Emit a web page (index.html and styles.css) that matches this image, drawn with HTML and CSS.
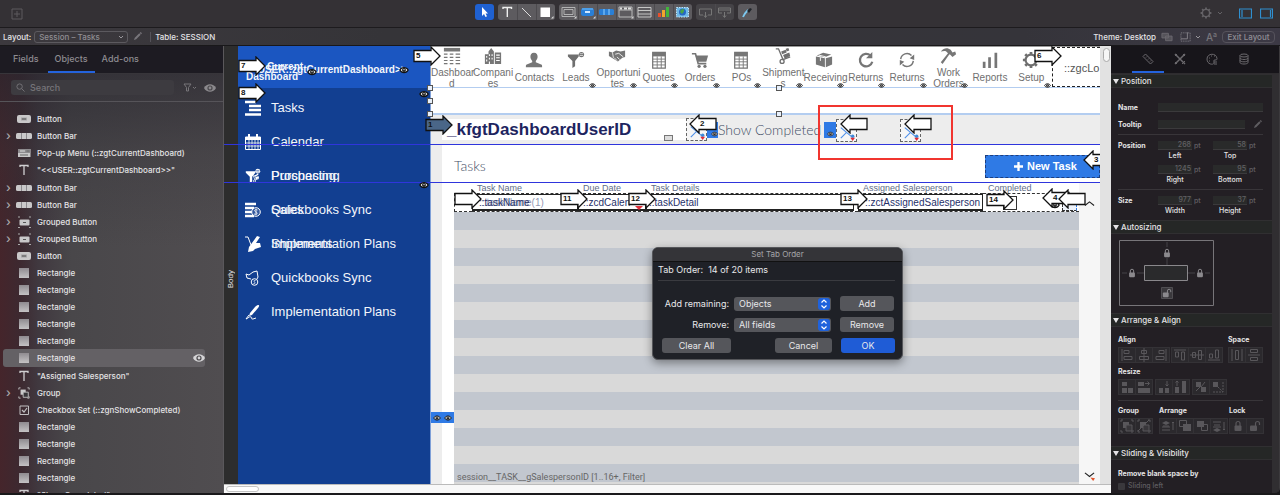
FILE: index.html
```html
<!DOCTYPE html>
<html lang="en">
<head>
<meta charset="utf-8">
<title>Session – Tasks</title>
<link rel="stylesheet" href="styles.css">
</head>
<body>
<svg class="defs" aria-hidden="true">
  <symbol id="arrow-r" viewBox="0 0 28 20"><path d="M1 4.5h17V1l9 9-9 9v-3.500H1z" stroke="#111" stroke-width="1.300"/></symbol>
  <symbol id="arrow-l" viewBox="0 0 28 20"><path d="M27 4.500H10V1l-9 9 9 9v-3.500h17z" stroke="#111" stroke-width="1.300"/></symbol>
  <symbol id="eye" viewBox="0 0 12 8"><path d="M1 4c2-4 8-4 10 0-2 4-8 4-10 0z" fill="#fff" stroke="#111" stroke-width="1.500"/><circle cx="6" cy="4" r="2.300" fill="#111"/><circle cx="6" cy="3.600" r=".8" fill="#fff"/></symbol>
  <symbol id="eye-ui" viewBox="0 0 12 8"><path d="M0 4c2.500-5 9.500-5 12 0-2.500 5-9.500 5-12 0z" fill="currentColor"/><circle cx="6" cy="4" r="2.600" fill="#4a484c"/><circle cx="6" cy="4" r="1.400" fill="currentColor"/></symbol>
  <symbol id="o-button" viewBox="0 0 16 12"><rect x="1" y="2" width="14" height="8" rx="2" fill="#c9c8c9"/><path d="M5 4.500h6v3H5z" fill="#a5a4a6"/><path d="M6 6h4" stroke="#555"/></symbol>
  <symbol id="o-bar" viewBox="0 0 16 12"><rect y="3" width="16" height="6" rx="1.500" fill="#c9c8c9"/><path d="M5.500 3v6M10.500 3v6" stroke="#8a888c"/></symbol>
  <symbol id="o-menu" viewBox="0 0 16 12"><path d="M2 2h12.500v8H2z" fill="#c9c8c9"/><path d="M2 2h12.500v4H2z" fill="#8d8b8e"/><path d="M4 4h5" stroke="#ddd"/><path d="M10.500 4h3M4 8h8" stroke="#666"/></symbol>
  <symbol id="o-text" viewBox="0 0 16 12"><path d="M4 3V1.500h8V3M8 1.500v9.500" stroke="#d0cfd1" stroke-width="1.300" fill="none"/></symbol>
  <symbol id="o-gbutton" viewBox="0 0 16 12"><rect x="3.500" y="3.500" width="10" height="6" rx="1" fill="#c9c8c9"/><path d="M7 6.500h3" stroke="#555"/><path d="M2 1h2M13 1h2M2 11.500h2M13 11.500h2" stroke="#aaa"/></symbol>
  <symbol id="o-rect" viewBox="0 0 16 12"><path d="M3 1h10v10H3z" fill="url(#rectfill)"/></symbol>
  <linearGradient id="rectfill" x2="0" y2="1"><stop stop-color="#8f8b90"/><stop offset="1" stop-color="#c4c2c4"/></linearGradient>
  <symbol id="group" viewBox="0 0 16 14"><path d="M4 3h6v6H4z" fill="currentColor"/><path d="M7 6h6v6H7z" fill="#38363a" stroke="currentColor"/><path d="M2 3V1h2M12 1h2v2M2 11v2h2M12 13h2v-2" stroke="currentColor" fill="none"/></symbol>
  <symbol id="o-check" viewBox="0 0 16 12"><path d="M4 2h8.500v8.500H4z" stroke="#c0bfc1" fill="none"/><path d="M6 6l2 2 3-4" stroke="#c0bfc1" fill="none" stroke-width="1.200"/></symbol>
  <symbol id="pencil" viewBox="0 0 10 10"><path d="M1 9l1-2.500L7 1.500 8.500 3 3.500 8zM7.500 1l1-1L10 1.500l-1 1z" fill="currentColor"/></symbol>
  <symbol id="chev" viewBox="0 0 6 4"><path d="M1 1l2 2 2-2" stroke="currentColor" fill="none"/></symbol>
  <symbol id="lock" viewBox="0 0 12 12"><rect x="2.500" y="5.500" width="7" height="5.500" rx="1" fill="currentColor"/><path d="M4 6V3.500a2 2 0 0 1 4 0V6" stroke="currentColor" fill="none" stroke-width="1.200"/></symbol>
  <symbol id="unlock" viewBox="0 0 12 12"><rect x="1" y="5.500" width="7" height="5.500" rx="1" fill="currentColor"/><path d="M6.500 6V3.500a2 2 0 0 1 4 0V5" stroke="currentColor" fill="none" stroke-width="1.200"/></symbol>
  <symbol id="gear" viewBox="0 0 20 20"><circle cx="10" cy="10" r="6" stroke="currentColor" stroke-width="2.400" fill="none"/><path d="M10 1v3M10 16v3M1 10h3M16 10h3M3.600 3.600l2.400 2.400M14 14l2.400 2.400M3.600 16.400L6 14M14 6l2.400-2.400" stroke="currentColor" stroke-width="3"/></symbol>
  <symbol id="tools" viewBox="0 0 20 22"><path d="M4 19l6-6 6 5M4 8l6 5" stroke="#4d8fe8" fill="none" stroke-width="1.200"/><circle cx="16.500" cy="17" r="1.800" fill="#3d8ad8"/><path d="M14 18.500h5L16.500 22z" fill="#e02b35"/></symbol>
  <symbol id="n-table" viewBox="0 0 20 20"><path d="M1 1h18v4H1z" fill="#767676"/><path d="M1 8h4M7.500 8h4M14 8h5M1 11.500h4M7.500 11.500h4M14 11.500h5M1 15h4M7.500 15h4M14 15h5M1 18.500h4M7.500 18.500h4M14 18.500h5" stroke="#767676" stroke-width="1.300"/></symbol>
  <symbol id="n-building" viewBox="0 0 20 20"><path d="M1 8h4V5l3-4 3 4v14H1zM12 6h7v13h-7z" fill="#767676"/><path d="M3 10v2M3 14v2M6 8v2M6 12v2M9 8v2M9 12v2M6 16v3M13.500 9h4M13.500 12h4M13.500 15h4" stroke="#fff" stroke-width="1.200"/></symbol>
  <symbol id="n-person" viewBox="0 0 20 20"><path d="M10 2c3 0 4 2 4 4.500 0 2-1 3.500-2 4.500v1.500l6 2.500c1 .5 1 1 1 3H1c0-2 0-2.500 1-3l6-2.500V11c-1-1-2-2.500-2-4.500C6 4 7 2 10 2z" fill="#767676"/></symbol>
  <symbol id="n-funnel" viewBox="0 0 20 20"><path d="M1 4h12v2L9 11v6l-3 2v-8L1 6z" fill="currentColor"/><circle cx="16" cy="4" r="3" fill="currentColor"/><path d="M14 3h4M14 5h4" stroke="var(--hole,#fff)" stroke-width=".7"/></symbol>
  <symbol id="n-shake" viewBox="0 0 20 20"><path d="M1 5l4 1 4-2 5 1 5-1v7l-3 1-5 4-5-3-5-3z" fill="#767676"/><path d="M5 6l1 6M8 8l4-1 5 4M7 12l3 3M10 11l3 3" stroke="#fff" stroke-width=".9" fill="none"/></symbol>
  <symbol id="n-sheet" viewBox="0 0 20 20"><path d="M3 1.500h14V19H3z" fill="#fff" stroke="#767676" stroke-width="1.400"/><path d="M3 2h14v4H3z" fill="#767676"/><path d="M3 9h14M3 12h14M3 15.500h14M8 6v13M12.500 6v13" stroke="#767676"/></symbol>
  <symbol id="n-cart" viewBox="0 0 20 20"><path d="M1 3h4l3 11h9" stroke="#767676" stroke-width="1.800" fill="none"/><path d="M5 5h14l-2 7H7z" fill="#767676"/><circle cx="9" cy="17" r="1.800" fill="#767676"/><circle cx="15.500" cy="17" r="1.800" fill="#767676"/></symbol>
  <symbol id="n-dolly" viewBox="0 0 20 20"><path d="M2 2h3l5 12 8-3" stroke="currentColor" stroke-width="1.500" fill="none"/><circle cx="9" cy="16" r="2.200" stroke="currentColor" fill="none" stroke-width="1.500"/><path d="M8 5l5-2 1 3-5 2zM10 9l7-3 1 4-6 3zM13 2l3-1 1 3-3 1z" fill="currentColor"/></symbol>
  <symbol id="n-box" viewBox="0 0 20 20"><path d="M1 6l10 2v10L1 15zM12 8l7-2v9l-7 3zM2 5l7-3 9 2-7 3z" fill="#767676"/><path d="M4 4.500l8 2M6 7v4" stroke="#fff"/></symbol>
  <symbol id="n-redo" viewBox="0 0 20 20"><path d="M15 5a7 7 0 1 0 2 7" stroke="#767676" stroke-width="2.500" fill="none"/><path d="M17 1v7h-7z" fill="#767676"/></symbol>
  <symbol id="n-sync" viewBox="0 0 20 20"><path d="M3 9a7 7 0 0 1 12-4M17 11a7 7 0 0 1-12 4" stroke="#767676" stroke-width="1.600" fill="none"/><path d="M18 4v6l-5-2zM2 16v-6l5 2z" fill="#767676"/></symbol>
  <symbol id="n-hammer" viewBox="0 0 20 20"><path d="M2 5c4-5 8-4 11-2l2 3 3-1 1 3-4 3-3-3-1 1L4 19l-2-2 8-10-2-2c-2-1-4 0-6 0z" fill="#767676"/></symbol>
  <symbol id="n-bars" viewBox="0 0 20 20"><path d="M2 12h3v7H2zM8 7h3v12H8zM15 2h3v17h-3z" fill="#767676"/></symbol>
  <symbol id="s-lines" viewBox="0 0 16 16"><path d="M0 2h11M4 6h12M4 10h12M0 14.500h16" stroke="#fff" stroke-width="2.400"/></symbol>
  <symbol id="s-cal" viewBox="0 0 16 16"><path d="M.5 3h15v12.500H.5z" stroke="#fff" fill="none"/><path d="M1 3h14v3H1zM3 0h2v4H3zM11 0h2v4h-2z" fill="#fff"/><path d="M1 9h14M1 12h14M4 6v9M7 6v9M10 6v9M13 6v9" stroke="#fff" stroke-width=".8"/></symbol>
  <symbol id="s-coin" viewBox="0 0 16 16"><path d="M0 2h11M0 6h9M0 10h8M0 14h9" stroke="#fff" stroke-width="2.400"/><circle cx="11" cy="10" r="4.300" stroke="#fff" fill="#34599f"/><path d="M12.500 8c-3-1-4 1-1.500 2s1 3-2 2M11 7v6" stroke="#fff" fill="none" stroke-width=".8"/></symbol>
  <symbol id="s-piggy" viewBox="0 0 16 16"><path d="M1 4l3 1 4-3 4-1 1 6-1 2M1 4l1 4 4 1" stroke="#fff" fill="none"/><circle cx="9.500" cy="12" r="3.300" stroke="#fff" fill="none"/><path d="M10.500 10.500c-2-.5-2 1-1 1.500s1 2-1 1.500" stroke="#fff" fill="none" stroke-width=".8"/></symbol>
  <symbol id="s-pen" viewBox="0 0 16 16"><path d="M13 1c2 0 1 2 0 3L7 11l-3 1 1-3 5-6c1-1 2-2 3-2z" fill="#fff"/><path d="M4 11l-3 4c3-1 3-3 5-2s-1 2 2 2l3-1" stroke="#fff" fill="none"/></symbol>
  <symbol id="s-ship" viewBox="0 0 16 16"><path d="M0 1h3l3 8" stroke="#fff" fill="none"/><path d="M12 0l3 1-4 6 4 0 1 4-6 2-2 2-5 1 1-5z" fill="#fff"/></symbol>
</svg>

<header class="topbar">
  <button class="tb-add" aria-label="New"><svg viewBox="0 0 12 12"><path d="M1 1h10v10H1zM6 3v6M3 6h6" stroke="#5d5a5e" fill="none"/></svg></button>
  <div class="tools">
    <div class="tg"><button class="on" aria-label="Select"><svg viewBox="0 0 19 16"><path d="M7 3v9l2-2 1.500 3 1.500-.7-1.500-2.800H13z" fill="#fff"/></svg></button></div>
    <div class="tg">
      <button aria-label="Text"><svg viewBox="0 0 19 16"><path d="M5 5V3.500h8.500V5M9.300 3.500V13" stroke="#eee" stroke-width="1.400" fill="none"/></svg></button>
      <button aria-label="Line"><svg viewBox="0 0 19 16"><path d="M5 4l9 9" stroke="#ddd"/></svg></button>
      <button aria-label="Rectangle"><svg viewBox="0 0 19 16"><path d="M4.500 3.500h9.500v9.500H4.500z" fill="#fff"/><path d="M17.500 12v2.500H15z" fill="#ddd"/></svg></button>
    </div>
    <div class="tg">
      <button aria-label="Field"><svg viewBox="0 0 19 16"><path d="M3 3.500h13v9H3zM5 5.500v5h9v-5z" stroke="#bbb" fill="none" stroke-width=".9"/><path d="M17.500 12v2.500H15z" fill="#ddd"/></svg></button>
      <button aria-label="Button"><svg viewBox="0 0 19 16"><rect x="3" y="4" width="13" height="8" rx="2.500" fill="#2a7fd6"/><path d="M4 5h11" stroke="#6fc0ff"/><path d="M7 8h5" stroke="#cfe8ff" stroke-width="2"/><path d="M17.500 12v2.500H15z" fill="#ddd"/></svg></button>
      <button aria-label="Button bar"><svg viewBox="0 0 19 16"><rect x="2" y="5" width="15" height="6" rx="1.500" fill="#2a7fd6"/><path d="M7 5v6M12 5v6" stroke="#8fd0ff"/></svg></button>
      <button aria-label="Tab control"><svg viewBox="0 0 19 16"><path d="M3 3h13v10H3zM3 6h13" stroke="#bbb" fill="none"/><path d="M4 4.500h2M8 4.500h3M12 4.500h3" stroke="#ddd" stroke-width="2"/><path d="M17.500 12v2.500H15z" fill="#ddd"/></svg></button>
      <button aria-label="Portal"><svg viewBox="0 0 19 16"><path d="M3 3.500h13v9.500H3zM3 6.500h13M3 10h13" stroke="#c5c5c5" fill="none"/></svg></button>
      <button aria-label="Chart"><svg viewBox="0 0 19 16"><path d="M4 9h3v4H4z" fill="#e8502c"/><path d="M8 6h3v7H8z" fill="#f0a62c"/><path d="M12 3h3v10h-3z" fill="#42b53c"/></svg></button>
      <button aria-label="Web viewer"><svg viewBox="0 0 19 16"><path d="M3.500 3.500h12v9.500h-12z" fill="#6fb9e6" stroke="#bfe3f8" stroke-dasharray="1.500 1"/><circle cx="9.500" cy="8" r="3.500" fill="#2668c4"/><path d="M8 5.500l3-.5v2.500L9 10 7 8z" fill="#48a34a"/></svg></button>
    </div>
    <div class="tg dim">
      <button aria-label="Field picker"><svg viewBox="0 0 19 16"><path d="M7 11H3.500V5h12v6H12M9.500 8v5M8 11.500l1.500 2 1.500-2" stroke="#777" fill="none"/></svg></button>
      <button aria-label="Part"><svg viewBox="0 0 19 16"><path d="M3.500 4h12v5H12M7 9H3.500V4M3.500 6h12M9.500 8v5M8 11.500l1.500 2 1.500-2" stroke="#777" fill="none"/></svg></button>
    </div>
    <div class="tg"><button aria-label="Format painter"><svg viewBox="0 0 19 16"><path d="M5 13c1-3 3-5 5-7" stroke="#7cc7ee" stroke-width="1.800"/><path d="M9 7l3-3 2 1-3 4z" fill="#20242a"/></svg></button></div>
  </div>
  <div class="tb-right">
    <button aria-label="Settings" class="tb-gear"><svg viewBox="0 0 20 20"><use href="#gear"/></svg></button>
    <svg class="chev" viewBox="0 0 6 4"><use href="#chev"/></svg>
    <button aria-label="Left pane" class="tb-pane"><svg viewBox="0 0 13 11"><path d="M.5 1h12v9H.5zM3 2v7" stroke="#2f8fd0" fill="none" stroke-width="1.200"/></svg></button>
    <button aria-label="Right pane" class="tb-pane"><svg viewBox="0 0 13 11"><path d="M.5 1h12v9H.5zM10.500 2v7" stroke="#2f8fd0" fill="none" stroke-width="1.200"/></svg></button>
  </div>
</header>

<div class="layoutbar">
  <label for="layout">Layout:</label>
  <span class="lsel"><select id="layout"><option>Session – Tasks</option></select><svg class="chev" viewBox="0 0 6 4"><use href="#chev"/></svg></span>
  <svg class="pencil" viewBox="0 0 10 10"><use href="#pencil"/></svg>
  <span class="table-name">Table: SESSION</span>
  <span class="theme">Theme: Desktop</span>
  <svg class="lb-ic" viewBox="0 0 13 10"><path d="M1 1h7v5H1zM5 4h7v5H5z" fill="#55535a" stroke="#6b6970"/></svg>
  <svg class="lb-ic" viewBox="0 0 13 10"><path d="M1 .5h10v9H1z" stroke="#88868c" fill="none" stroke-dasharray="1 1"/><path d="M8 0v7H1" stroke="#88868c" fill="none"/></svg>
  <svg class="chev lb-chev" viewBox="0 0 6 4"><use href="#chev"/></svg>
  <span class="aa">A<sup>a</sup></span>
  <button class="exit">Exit Layout</button>
</div>

<main class="work">
  <aside class="left">
    <nav class="tabs"><button>Fields</button><button class="on">Objects</button><button>Add-ons</button></nav>
    <div class="search">
      <label class="sbox"><svg viewBox="0 0 10 10"><circle cx="4" cy="4" r="3" stroke="#777579" fill="none"/><path d="M6.300 6.300L9.500 9.500" stroke="#777579"/></svg><input type="text" placeholder="Search" aria-label="Search"></label>
      <svg class="filt" viewBox="0 0 14 9"><path d="M1 1h7L5.500 4.500V8h-2V4.500z" stroke="#777579" fill="none"/><path d="M10 4l1.500 1.500L13 4" stroke="#777579" fill="none"/></svg>
      <svg class="eyeui" viewBox="0 0 12 8"><use href="#eye-ui"/></svg>
    </div>
    <ul class="objs">
      <li><i></i><svg><use href="#o-button"/></svg>Button</li>
      <li><i>›</i><svg><use href="#o-bar"/></svg>Button Bar</li>
      <li><i></i><svg><use href="#o-menu"/></svg>Pop-up Menu (::zgtCurrentDashboard)</li>
      <li class="txt"><i></i><svg><use href="#o-text"/></svg>"&lt;&lt;USER::zgtCurrentDashboard&gt;&gt;"</li>
      <li><i>›</i><svg><use href="#o-bar"/></svg>Button Bar</li>
      <li><i>›</i><svg><use href="#o-bar"/></svg>Button Bar</li>
      <li><i>›</i><svg><use href="#o-gbutton"/></svg>Grouped Button</li>
      <li><i>›</i><svg><use href="#o-gbutton"/></svg>Grouped Button</li>
      <li><i></i><svg><use href="#o-button"/></svg>Button</li>
      <li><i></i><svg><use href="#o-rect"/></svg>Rectangle</li>
      <li><i></i><svg><use href="#o-rect"/></svg>Rectangle</li>
      <li><i></i><svg><use href="#o-rect"/></svg>Rectangle</li>
      <li><i></i><svg><use href="#o-rect"/></svg>Rectangle</li>
      <li><i></i><svg><use href="#o-rect"/></svg>Rectangle</li>
      <li class="sel"><i></i><svg><use href="#o-rect"/></svg>Rectangle<svg class="eyeui" viewBox="0 0 12 8"><use href="#eye-ui"/></svg></li>
      <li><i></i><svg><use href="#o-text"/></svg>"Assigned Salesperson"</li>
      <li><i>›</i><svg><use href="#group"/></svg>Group</li>
      <li><i></i><svg><use href="#o-check"/></svg>Checkbox Set (::zgnShowCompleted)</li>
      <li><i></i><svg><use href="#o-rect"/></svg>Rectangle</li>
      <li><i></i><svg><use href="#o-rect"/></svg>Rectangle</li>
      <li><i></i><svg><use href="#o-rect"/></svg>Rectangle</li>
      <li><i></i><svg><use href="#o-rect"/></svg>Rectangle</li>
      <li class="txt"><i></i><svg><use href="#o-text"/></svg>"Show Completed"</li>
    </ul>
  </aside>

  <section class="canvas">
    <div class="stage">
      <div class="part"><span>Body</span></div>
      <div class="side">
        <div class="who"><b class="w1">&lt;&lt;USER::zgtCurrentDashboard&gt;&gt;</b><b class="w2">Current<br>Dashboard</b></div>
        <ul class="menu">
          <li><svg><use href="#s-lines"/></svg><span class="stack"><a href="#">Tasks</a></span></li>
          <li><svg><use href="#s-cal"/></svg><span class="stack"><a href="#">Calendar</a></span></li>
          <li><svg><use href="#n-funnel"/><use href="#n-dolly" x="5" y="5" width="10" height="10"/></svg><span class="stack"><a href="#">Prospecting</a><a href="#">Purchasing</a></span></li>
          <li><svg><use href="#s-coin"/></svg><span class="stack"><a href="#">Quickbooks Sync</a><a href="#">Sales</a></span></li>
          <li><svg><use href="#s-ship"/></svg><span class="stack"><a href="#">Implementation Plans</a><a href="#">Shipments</a></span></li>
          <li><svg><use href="#s-piggy"/></svg><span class="stack"><a href="#">Quickbooks Sync</a></span></li>
          <li><svg><use href="#s-pen"/></svg><span class="stack"><a href="#">Implementation Plans</a></span></li>
        </ul>
      </div>
      <div class="page">
        <div class="navrow">
          <nav class="nav">
            <a href="#" class="two"><svg><use href="#n-table"/></svg>Dashboar<br>d</a>
            <a href="#" class="two"><svg><use href="#n-building"/></svg>Compani<br>es</a>
            <a href="#"><svg><use href="#n-person"/></svg>Contacts</a>
            <a href="#"><svg><use href="#n-funnel"/></svg>Leads<svg class="ey"><use href="#eye"/></svg></a>
            <a href="#" class="two"><svg><use href="#n-shake"/></svg>Opportuni<br>tes<svg class="ey"><use href="#eye"/></svg></a>
            <a href="#"><svg><use href="#n-sheet"/></svg>Quotes<svg class="ey"><use href="#eye"/></svg></a>
            <a href="#"><svg><use href="#n-cart"/></svg>Orders<svg class="ey"><use href="#eye"/></svg></a>
            <a href="#"><svg><use href="#n-sheet"/></svg>POs<svg class="ey"><use href="#eye"/></svg></a>
            <a href="#" class="two"><svg><use href="#n-dolly"/></svg>Shipment<br>s<svg class="ey"><use href="#eye"/></svg></a>
            <a href="#"><svg><use href="#n-box"/></svg>Receiving<svg class="ey"><use href="#eye"/></svg></a>
            <a href="#"><svg><use href="#n-redo"/></svg>Returns<svg class="ey"><use href="#eye"/></svg></a>
            <a href="#"><svg><use href="#n-sync"/></svg>Returns<svg class="ey"><use href="#eye"/></svg></a>
            <a href="#" class="two"><svg><use href="#n-hammer"/></svg>Work<br>Orders<svg class="ey"><use href="#eye"/></svg></a>
            <a href="#"><svg><use href="#n-bars"/></svg>Reports</a>
            <a href="#"><svg><use href="#gear"/></svg>Setup<svg class="ey"><use href="#eye"/></svg></a>
          </nav>
          <div class="logo">::zgcLo</div>
        </div>
        <div class="selected"></div>
        <div class="record">
          <div class="userid">_kfgtDashboardUserID</div>
          <span class="tool"><svg><use href="#tools"/></svg></span><span class="bluebox"></span>
          <span class="show">Show Completed</span>
        </div>
        <div class="body">
          <div class="taskhead"><h1>Tasks</h1><button class="new"><svg viewBox="0 0 10 10"><path d="M5 0v10M0 5h10" stroke="#fff" stroke-width="2.600"/></svg>New Task</button></div>
          <div class="portal">
            <table>
              <colgroup><col class="c0"><col class="c1"><col class="c2"><col><col class="c4"><col class="c5"></colgroup>
              <thead><tr><th></th><th>Task Name</th><th>Due Date</th><th>Task Details</th><th>Assigned Salesperson</th><th>Completed</th></tr></thead>
              <tbody><tr><td></td><td><div class="fld">::taskName<span class="ghost">::taskName(1)</span></div></td><td><div class="fld due">::zcdCalen<i class="tri"></i></div></td><td><div class="fld det">::taskDetail</div></td><td><div class="fld">::zctAssignedSalesperson</div></td><td><input class="done" type="checkbox" aria-label="Completed"></td></tr></tbody>
            </table>
            <div class="stripes"><span>session__TASK__gSalespersonID [1..16+, Filter]</span></div>
          </div>
          <div class="pscroll">
            <svg viewBox="0 0 12 8"><path d="M1 6l5-4 5 4" stroke="#222" fill="none" stroke-width="1.200"/></svg>
            <svg viewBox="0 0 12 12"><path d="M1 2l5 4 5-4" stroke="#222" fill="none" stroke-width="1.200"/><path d="M7 7l3 4 2-3z" fill="#e0532b"/></svg>
          </div>
        </div>
      </div>
      <div class="vscroll"><i></i></div>

      <i class="guide g1"></i><i class="guide g2"></i>
      <i class="selv"></i>
      <i class="handle h1"></i><i class="handle h2"></i><i class="handle h3"></i><i class="handle h4"></i><i class="handle h5"></i>
      <span class="float-tool f1"><svg><use href="#tools"/></svg></span>
      <span class="float-tool f2"><svg><use href="#tools"/></svg></span>
      <i class="bluebox fb"></i>
      <i class="eyebox"><svg><use href="#eye"/></svg><svg><use href="#eye"/></svg></i>
      <i class="keyb"></i>
      <i class="redbox"></i>
      <svg class="mk e1"><use href="#eye"/></svg><svg class="mk e2"><use href="#eye"/></svg><svg class="mk e3"><use href="#eye"/></svg><svg class="mk e4"><use href="#eye"/></svg><svg class="mk e5 s"><use href="#eye"/></svg><svg class="mk e6 s"><use href="#eye"/></svg><svg class="mk e7"><use href="#eye"/></svg>
      <i class="lookup"></i>
      <span class="ar a7"><svg><use href="#arrow-r"/></svg>7</span>
      <span class="ar a8"><svg><use href="#arrow-r"/></svg>8</span>
      <span class="ar a5"><svg><use href="#arrow-r"/></svg>5</span>
      <span class="ar a6"><svg><use href="#arrow-r"/></svg>6</span>
      <span class="ar a1"><svg><use href="#arrow-r"/></svg>1</span>
      <span class="ar l a2"><svg><use href="#arrow-l"/></svg>2</span>
      <span class="ar l ax"><svg><use href="#arrow-l"/></svg></span>
      <span class="ar l ay"><svg><use href="#arrow-l"/></svg></span>
      <span class="ar l a3"><svg><use href="#arrow-l"/></svg>3</span>
      <span class="ar az"><svg><use href="#arrow-r"/></svg></span>
      <span class="ar a11"><svg><use href="#arrow-r"/></svg>11</span>
      <span class="ar a12"><svg><use href="#arrow-r"/></svg>12</span>
      <span class="ar a13"><svg><use href="#arrow-r"/></svg>13</span>
      <span class="ar a14"><svg><use href="#arrow-r"/></svg>14</span>
      <span class="ar l a4"><svg><use href="#arrow-l"/></svg>4</span>
      <span class="ar l aw"><svg><use href="#arrow-l"/></svg></span>

      <form class="dialog">
        <h2>Set Tab Order</h2>
        <p>Tab Order: &nbsp;14 of 20 items</p>
        <div class="dgrid">
          <label for="add">Add remaining:</label><span class="pick"><select id="add"><option>Objects</option></select><b><svg viewBox="0 0 10 12"><path d="M2.500 4.500L5 2l2.500 2.500M2.500 7.500L5 10l2.500-2.500" stroke="#fff" fill="none" stroke-width="1.200"/></svg></b></span><button type="button">Add</button>
          <label for="rem">Remove:</label><span class="pick"><select id="rem"><option>All fields</option></select><b><svg viewBox="0 0 10 12"><path d="M2.500 4.500L5 2l2.500 2.500M2.500 7.500L5 10l2.500-2.500" stroke="#fff" fill="none" stroke-width="1.200"/></svg></b></span><button type="button">Remove</button>
        </div>
        <div class="dbtns"><button type="button" class="clear">Clear All</button><button type="button" class="cancel">Cancel</button><button type="button" class="ok">OK</button></div>
      </form>
    </div>
    <div class="hscroll"><i></i></div>
  </section>

  <aside class="right">
    <nav class="rtabs">
      <button class="on" aria-label="Position"><svg viewBox="0 0 12 12"><path d="M1 3.500L3.500 1 11 8.500 8.500 11zM4 4.500l1-1M6 6.500l1-1M8 8.500l1-1" stroke="#6b696d" fill="none"/></svg></button>
      <button aria-label="Styles"><svg viewBox="0 0 12 12"><path d="M1 1l10 10M11 1L1 11" stroke="#6b696d" stroke-width="1.500"/><path d="M1 3l2-2M8 11l3-3M9 1l2 2M1 9l2 2" stroke="#6b696d"/></svg></button>
      <button aria-label="Appearance"><svg viewBox="0 0 12 12"><path d="M11 5.500C10.500-.5 1 0 1 6s7 6 7 4-1-3 1-3 2-.5 2-1.500z" stroke="#6b696d" fill="none"/><path d="M3 5h1M5 3h1M8 3h1M3 8h1M8 9h3M8 11h3" stroke="#6b696d"/></svg></button>
      <button aria-label="Data"><svg viewBox="0 0 12 12"><ellipse cx="6" cy="2.500" rx="4" ry="1.500" stroke="#6b696d" fill="none"/><path d="M2 2.500v7c0 2 8 2 8 0v-7M2 5c0 2 8 2 8 0M2 7.300c0 2 8 2 8 0" stroke="#6b696d" fill="none"/></svg></button>
    </nav>
    <div class="insp">
      <h3>Position</h3>
      <div class="sec pos">
        <div class="row"><label for="nm">Name</label><input id="nm" type="text"></div>
        <div class="row"><label for="tt">Tooltip</label><input id="tt" type="text"><svg class="pencil" viewBox="0 0 10 10"><use href="#pencil"/></svg></div>
        <hr>
        <div class="pgrid"><b>Position</b>
          <label><span><input type="text" value="268">pt</span>Left</label><label><span><input type="text" value="58">pt</span>Top</label>
          <label class="second"><span><input type="text" value="1245">pt</span>Right</label><label><span><input type="text" value="95">pt</span>Bottom</label></div>
        <hr>
        <div class="pgrid"><b>Size</b><label><span><input type="text" value="977">pt</span>Width</label><label><span><input type="text" value="37">pt</span>Height</label></div>
      </div>
      <h3>Autosizing</h3>
      <div class="sec auto">
        <svg viewBox="0 0 96 66"><path d="M.5.500h94v65H.5z" stroke="#777579" fill="none"/><path d="M25.500 25.500h43v15h-43z" stroke="#8a888c" fill="#2a2a2c"/><path d="M3 33h22M69 33h22M48 2v23" stroke="#454347"/><path d="M8 28h10v10H8zM76 28h10v10H76zM43 7h10v11H43z" fill="#231f24"/><g color="#8b898d"><use href="#lock" x="8" y="28" width="10" height="10"/><use href="#lock" x="76" y="28" width="10" height="10"/><use href="#lock" x="43" y="8" width="10" height="10"/></g><path d="M42.500 47.500h11v11h-11z" fill="#3a383c" stroke="#504e52"/><g color="#8b898d"><use href="#unlock" x="43" y="48" width="10" height="10"/></g></svg>
      </div>
      <h3>Arrange &amp; Align</h3>
      <div class="sec arr">
        <div class="arow"><div><b>Align</b><div class="bg">
          <button aria-label="Left"><svg><path d="M3 2v12M5 3.500h5v3H5zM5 9.500h8v3H5z"/></svg></button><button aria-label="Center"><svg><path d="M8 1v14M5.500 3.500h5v3h-5zM3.500 9.500h9v3h-9z"/></svg></button><button aria-label="Right"><svg><path d="M13 2v12M6 3.500h5v3H6zM3 9.500h8v3H3z"/></svg></button></div></div>
          <div class="bg"><button aria-label="Top"><svg><path d="M2 3h12M3.500 5h3v5h-3zM9.500 5h3v8h-3z"/></svg></button><button aria-label="Middle"><svg><path d="M1 8h14M3.500 5.500h3v5h-3zM9.500 3.500h3v9h-3z"/></svg></button><button aria-label="Bottom"><svg><path d="M2 13h12M3.500 7h3v4h-3zM9.500 3h3v8h-3z"/></svg></button></div>
          <div class="end"><b>Space</b><div class="bg"><button aria-label="Horizontal"><svg><path d="M3 2v12M13 2v12M6.500 3.500h3v9h-3z"/></svg></button><button aria-label="Vertical"><svg><path d="M2 8h12M4.500 2.500h7v3h-7zM4.500 10.500h7v3h-7z"/></svg></button></div></div></div>
        <div class="arow gap2"><div><b>Resize</b><div class="bg"><button aria-label="Width min"><svg><path class="f" d="M3 3h5v4H3zM3 9h5v5H3zM9 9h5v5H9z"/></svg></button><button aria-label="Width max"><svg><path class="f" d="M2 3h6v4H2zM2 9h12v5H2z"/><path d="M9 4.500h4M11.500 2.500l2 2-2 2"/></svg></button></div></div>
          <div class="bg"><button aria-label="Height min"><svg><path class="f" d="M3 9h4v5H3zM9 9h4v5H9z"/><path d="M11 2v5M9.500 5.500L11 7l1.500-1.500"/></svg></button><button aria-label="Height max"><svg><path class="f" d="M2 8h4v6H2zM9 2h4v12H9z"/><path d="M4 2v5M2.500 3.500L4 2l1.500 1.500"/></svg></button></div>
          <div class="bg"><button aria-label="Both min"><svg><path class="f" d="M3 3h5v5H3zM8 8h5v5H8z"/><path d="M12 3L8 8M3 12l4-4"/></svg></button><button aria-label="Both max"><svg><path class="f" d="M3 3h5v5H3z"/><path d="M3 13h10V3M8 8l5 5" stroke-dasharray="2 1"/></svg></button></div></div>
        <hr>
        <div class="arow"><div><b>Group</b><div class="bg"><button aria-label="Group"><svg><use href="#group" y="1" width="16" height="14"/></svg></button><button aria-label="Ungroup"><svg><use href="#group" y="1" width="16" height="14"/><path d="M2 13L13 2"/></svg></button></div></div>
          <div class="arrg"><b>Arrange</b><div class="bg"><button aria-label="Front"><svg><path class="f" d="M2 5l4-2 4 2-4 2z"/><path d="M2 9h8M3 8h6M2 12h8M13 4v8M12 5l1-1 1 1"/></svg></button><button aria-label="Forward"><svg><path d="M2.500 2.500h7v6h-7z"/><path class="f" d="M6 6h8v7H6z"/></svg></button><button aria-label="Backward"><svg><path class="f" d="M3 3h7v6H3z"/><path d="M7.500 6.500h6v6h-6z"/></svg></button><button aria-label="Back"><svg><path class="f" d="M2 12l4-2 4 2-4 2z"/><path d="M2 4h8M3 7h6M2 9h8M13 4v8M12 11l1 1 1-1"/></svg></button></div></div>
          <div class="end"><b>Lock</b><div class="bg"><button aria-label="Lock"><svg><use href="#lock" x="2" y="2" width="12" height="12"/></svg></button><button aria-label="Unlock"><svg><use href="#unlock" x="2" y="2" width="12" height="12"/></svg></button></div></div></div>
      </div>
      <h3>Sliding &amp; Visibility</h3>
      <div class="sec slide"><b>Remove blank space by</b><label><input type="checkbox">Sliding left</label></div>
    </div>
  </aside>
</main>
</body>
</html>
```
FILE: styles.css
```css
* { box-sizing: border-box; }
body { margin: 0; height: 100vh; padding-bottom: 2px; overflow: hidden; display: flex; flex-direction: column; background: #1a191b; color: #e4e3e5; font: 500 8px/12px Inter, "Liberation Sans", sans-serif; }
button, input, select { font: inherit; color: inherit; margin: 0; padding: 0; border: 0; background: none; appearance: none; }
svg { display: block; fill: none; }
a { color: inherit; text-decoration: none; }
ul { list-style: none; margin: 0; padding: 0; }
h1, h2, h3, p { margin: 0; }
i { font-style: normal; }
.defs { position: absolute; width: 0; height: 0; }

.topbar { height: 28px; flex: none; display: flex; align-items: center; background: #343135; border-bottom: 1px solid #1d1b1e; padding: 0 7px 0 11px; }
.tb-add { flex: 464 0 0; }
.tb-add svg { width: 12px; height: 12px; }
.tools { display: flex; gap: 4px; margin-bottom: 3px; }
.tg { display: flex; border-radius: 3px; overflow: hidden; }
.tg button { width: 19px; height: 16px; background: #5d5b5f; }
.tg button + button { border-left: 1px solid #4c4a4e; }
.tg svg { width: 19px; height: 16px; }
.tg button + button svg { margin-left: -1px; }
.tg .on { background: #1f61d2; }
.tg.dim button { background: #454347; }
.tb-right { flex: 517 0 0; display: flex; align-items: center; justify-content: flex-end; gap: 8px; color: #646266; margin-bottom: 1px; }
.tb-gear svg { width: 12px; height: 12px; }
.chev { width: 6px; height: 4px; }
.tb-right .chev { margin-right: 8px; margin-left: -3px; }
.tb-pane svg { width: 13px; height: 11px; }
.tb-pane { width: 13px; }

.layoutbar { height: 18px; flex: none; display: flex; align-items: center; background: linear-gradient(90deg, #3c393e, #353438 30%, #35343a 80%, #3c3945); border-bottom: 1px solid #19181a; padding: 0 5px 0 3px; }
.lsel { position: relative; margin: 0 5px 0 3px; }
.lsel select { display: block; width: 94px; height: 12px; border: 1px solid #5c5a5f; border-radius: 3px; padding-left: 4px; color: #908e93; line-height: 10px; }
.lsel .chev { position: absolute; right: 4px; top: 4px; color: #99979c; }
.pencil { width: 9px; height: 9px; color: #78767b; }
.table-name { border-left: 1px solid #55535a; margin-left: 8px; padding-left: 4px; line-height: 10px; }
.theme { margin-left: auto; margin-right: 5px; }
.lb-ic { width: 12px; height: 10px; margin-right: 7px; }
.lb-chev { color: #99979c; margin-left: -4px; }
.aa { color: #77757b; font-size: 10px; margin: 0 5px; }
.aa sup { font-size: 7px; line-height: 4px; }
.exit { width: 53px; height: 12px; border: 1px solid #56535c; border-radius: 4px; color: #908e95; line-height: 10px; white-space: nowrap; }

.work { flex: 1; min-height: 0; display: flex; }

.left { width: 224px; flex: none; display: flex; flex-direction: column; overflow: hidden; border-right: 1px solid #5a585b; background: linear-gradient(180deg, rgba(38,36,44,.75), rgba(50,48,54,.3) 24%, rgba(70,68,72,0) 45%), linear-gradient(90deg, #45252b, #3d2930 9%, #40383f 17%, #49474a 32%, #504d50); }
.tabs { height: 28px; flex: none; padding-left: 4px; display: flex; background: #1d1b22; border-bottom: 1px solid #37353a; color: #8e8c91; font-size: 9px; }
.tabs button { padding: 0 9px; border-bottom: 2px solid transparent; }
.tabs button:nth-child(2) { border-color: #2463dd; padding: 0 7px; }
.tabs button:nth-child(3) { padding: 0 7px; }
.search { height: 28px; flex: none; display: flex; align-items: center; border-bottom: 1px solid #565459; padding: 0 7px 0 11px; }
.sbox { flex: 1; height: 15px; display: flex; align-items: center; gap: 5px; padding-left: 5px; border-radius: 3px; background: #3d3b40; font-size: 9px; }
.sbox input { width: 100px; }
.sbox input::placeholder { color: #77757a; opacity: 1; }
.sbox svg { width: 9px; height: 9px; }
.filt { width: 14px; height: 9px; margin: 0 7px 0 9px; }
.eyeui { width: 12px; height: 8px; color: #8b898d; }
.objs { padding-top: 8px; line-height: 16px; }
.objs li { height: 17px; flex: none; display: flex; align-items: center; margin: 0 18px 0 3px; padding-left: 3px; white-space: nowrap; border-radius: 3px; }
.objs li.txt { height: 18px; }
.objs i { width: 10px; font-size: 12px; color: #aaa8ac; line-height: 12px; }
.objs i + svg { width: 16px; height: 12px; margin-right: 5px; color: #c9c8c9; }
.objs .sel { background: #646165; height: 18px; }
.sel .eyeui { margin-left: auto; color: #d5d4d6; }

.canvas { flex: 1; min-width: 0; display: flex; flex-direction: column; font-family: "Liberation Sans", Arial, sans-serif; font-weight: 400; }
.stage { flex: 1; min-height: 0; position: relative; display: flex; overflow: hidden; }
.part { width: 14px; flex: none; background: #2d2d2d; display: flex; align-items: center; justify-content: center; padding-top: 28px; }
.part span { writing-mode: vertical-rl; transform: rotate(180deg); font-size: 8px; }
.side { width: 193px; flex: none; background: #123f91; color: #f3f6fb; border-right: 1px solid #7fa0d8; }
.who { height: 42px; background: #1b56c1; display: grid; overflow: hidden; font-size: 10px; line-height: 12px; padding: 18px 0 3px 8px; }
.who b { grid-area: 1 / 1; white-space: nowrap; }
.w2 { text-indent: 21px; height: 18px; overflow: hidden; line-height: 10px; margin-top: -2px; }
.menu { padding-top: 3px; }
.menu li { height: 34px; display: flex; align-items: center; gap: 10px; padding-left: 7px; font: 300 13px/18px "Liberation Sans", sans-serif; }
.menu svg { width: 16px; height: 16px; color: #fff; --hole: #123f91; }
.stack { display: grid; }
.stack a { grid-area: 1 / 1; }

.page { flex: 1; min-width: 0; background: #ededed; color: #26306a; display: flex; flex-direction: column; }
.navrow { height: 41px; flex: none; display: flex; background: #fff; border-top: 1px solid #999; }
.nav { flex: 1; display: grid; grid-template-columns: repeat(15, 1fr); color: #6f6f6f; font-size: 10px; line-height: 11px; }
.nav a { position: relative; text-align: center; padding-top: 4px; white-space: nowrap; display: flow-root; min-width: 0; }
.nav a > svg:first-child { width: 18px; height: 18px; margin: 0 auto 3px; }
.nav .two { padding-top: 0; }
.nav .two > svg:first-child { margin-bottom: 2px; }
.nav .ey { position: absolute; right: 1px; bottom: 1px; width: 7px; height: 5px; }
.logo { width: 48px; border: 1px dashed #222; border-right: 0; color: #555; font-size: 11px; line-height: 41px; padding-left: 11px; overflow: hidden; }
.selected { height: 28px; flex: none; background: #fff; border: 2px solid #b3cdf0; border-width: 1px 0 2px; }
.record { height: 29px; flex: none; display: flex; align-items: center; padding-left: 11px; }
.userid { width: 244px; height: 21px; background: #fff; font: bold 17px/21px "Liberation Sans", sans-serif; color: #1d2460; padding-left: 5px; }
.tool, .float-tool { width: 21px; height: 23px; border: 1px dashed #666; background: #f6f6f6; }
.tool svg, .float-tool svg { width: 19px; height: 21px; }
.bluebox { width: 11px; height: 16px; background: #2f7ae5; }
.show { font: 300 14px/20px Lato, sans-serif; color: #3f4d66; white-space: nowrap; }
.body { flex: 1; min-height: 0; margin-left: 11px; padding-left: 12px; background: #fff; display: grid; grid-template: 39px 1fr / 1fr 21px; }
.taskhead { grid-column: 1 / 3; display: flex; align-items: center; justify-content: space-between; }
.taskhead h1 { font: 300 14px/20px Lato, sans-serif; color: #3f4d66; margin-top: 5px; }
.new { width: 115px; height: 23px; border: 1px dashed #1c3f80; background: #2f7ae5; color: #fff; font: bold 11px/20px "Liberation Sans", sans-serif; display: flex; align-items: center; gap: 4px; padding-left: 28px; margin-top: 5px; white-space: nowrap; }
.new svg { width: 9px; height: 9px; }
.portal { display: flex; flex-direction: column; min-height: 0; }
table { width: 100%; table-layout: fixed; border-collapse: separate; border-spacing: 0; flex: none; }
.c0 { width: 18px; } .c1 { width: 106px; } .c2 { width: 68px; } .c4 { width: 125px; } .c5 { width: 96px; }
th { height: 10px; padding: 0 0 0 5px; text-align: left; font: 400 9px/10px "Liberation Sans", sans-serif; color: #5f6d86; white-space: nowrap; }
td { height: 19px; padding: 0; border-top: 1px dashed #333; border-bottom: 1px dashed #333; }
td:first-child { border-left: 1px dashed #333; }
.fld { position: relative; height: 17px; border: 1px solid #222; border-bottom-width: 2px; font-size: 10px; line-height: 15px; padding-left: 6px; white-space: nowrap; }
.due { padding-left: 4px; }
.ghost { position: absolute; left: 8px; top: 0; opacity: .5; }
.det { margin-right: 4px; padding-left: 2px; }
.tri { position: absolute; right: 2px; bottom: -1px; border: 4px solid transparent; border-top-color: #e0303a; border-bottom: 0; }
.done { display: block; width: 14px; height: 14px; border: 1px solid #333; background: #fff; margin-left: 20px; }
.stripes { flex: 1; background: repeating-linear-gradient(180deg, #c2c7cf 0 18px, #d9d9d9 18px 36px); display: flex; align-items: flex-end; padding: 0 0 0 3px; font: 9px/14px Roboto, sans-serif; color: #666; }
.pscroll { background: #f6f6f6; display: flex; flex-direction: column; justify-content: space-between; padding: 17px 0 2px 5px; }
.pscroll svg { width: 11px; }
.vscroll { width: 11px; flex: none; background: #e2e2e2; padding: 2px 3px; z-index: 1; }
.vscroll i { display: block; height: 14px; width: 7px; border: 1px solid #aaa; border-radius: 4px; background: #f6f6f6; }
.hscroll { height: 9px; flex: none; background: #f8f8f8; border-top: 1px solid #bbb; padding: 1px 2px; }
.hscroll i { display: block; width: 33px; height: 6px; border: 1px solid #c4c4c4; border-radius: 3px; background: #fff; }

/* layout-mode annotations lying over the design surface */
.guide { position: absolute; left: 0; right: 11px; height: 1px; background: #2f35dc; }
.g1 { top: 98px; } .g2 { top: 136px; }
.selv { position: absolute; left: 206px; top: 0; width: 1px; height: 70px; background: #7fa0d8; }
.handle { position: absolute; width: 6px; height: 6px; border: 1px solid #555; background: #e8f0fb; }
.h1 { left: 203px; top: 39px; } .h2 { left: 203px; top: 52px; } .h3 { left: 203px; top: 65px; } .h4 { left: 552px; top: 39px; } .h5 { left: 552px; top: 65px; }
.float-tool { position: absolute; top: 73px; }
.f1 { left: 612px; } .f2 { left: 676px; }
.fb { position: absolute; left: 600px; top: 76px; width: 12px; }
.eyebox { position: absolute; left: 207px; top: 366px; width: 23px; height: 11px; background: #2f7ae5; display: flex; align-items: center; justify-content: space-around; }
.eyebox svg { width: 8px; height: 6px; }
.keyb { position: absolute; left: 440px; top: 89px; width: 9px; height: 6px; border: 1px solid #777; background: #ddd; }
.redbox { position: absolute; left: 594px; top: 59px; width: 135px; height: 55px; border: 2px solid #f1352f; }
.mk { position: absolute; width: 10px; height: 8px; }
.mk.s { width: 7px; height: 6px; }
.e1 { left: 83px; top: 22px; } .e2 { left: 175px; top: 20px; } .e3 { left: 195px; top: 44px; } .e4 { left: 195px; top: 135px; } .e5 { left: 487px; top: 85px; } .e6 { left: 603px; top: 85px; } .e7 { left: 826px; top: 155px; }
.lookup { position: absolute; left: 838px; top: 150px; width: 15px; height: 15px; border: 1px dashed #333; border-right-color: #2f7ae5; background: #eef3fb; }
.ar { position: absolute; width: 28px; height: 20px; color: #111; font: bold 8px/20px "Liberation Sans", sans-serif; padding-left: 3px; z-index: 0; }
.ar.l { padding-left: 11px; }
.ar svg { position: absolute; left: 0; top: 0; width: 28px; height: 20px; fill: #fff; z-index: -1; }
.a7 { left: 14px; top: 10px; } .a8 { left: 14px; top: 37px; } .a5 { left: 189px; top: 0; } .a6 { left: 810px; top: 0; }
.a1 { left: 201px; top: 69px; } .a1 svg { fill: #4a6688; }
.a2 { left: 465px; top: 68px; } .ax { left: 616px; top: 68px; } .ay { left: 680px; top: 68px; } .a3 { left: 859px; top: 104px; }
.az { left: 230px; top: 143px; } .a11 { left: 336px; top: 143px; } .a12 { left: 404px; top: 143px; } .a13 { left: 616px; top: 143px; } .a14 { left: 762px; top: 144px; }
.a4 { left: 818px; top: 142px; } .aw { left: 834px; top: 143px; }

.dialog { position: absolute; left: 428px; top: 201px; width: 251px; border: 1px solid #55565a; border-radius: 6px; background: #1f2127; color: #e8e8ea; z-index: 2; box-shadow: 0 3px 10px rgba(0,0,0,.4); font: 400 9px/14px Inter, sans-serif; padding-bottom: 6px; }
.dialog h2 { font: 400 8px/13px Inter, sans-serif; color: #a5a5a8; text-align: center; background: #343438; border-bottom: 1px solid #111; border-radius: 5px 5px 0 0; }
.dialog p { margin: 0 7px 0 5px; padding: 1px 0 3px; height: 19px; border-bottom: 1px solid #3a3b40; }
.dgrid { display: grid; grid-template-columns: 76px 97px 54px; column-gap: 5px; row-gap: 6px; padding: 15px 0 0; align-items: center; }
.dgrid label { text-align: right; white-space: nowrap; }
.dgrid button { margin-left: 4px; }
.dialog button { height: 15px; width: 54px; border-radius: 3px; background: #55565b; line-height: 15px; }
.pick { position: relative; height: 14px; display: block; }
.pick select { display: block; width: 97px; height: 14px; line-height: 14px; border-radius: 3px; background: #55565b; padding-left: 5px; }
.pick b { position: absolute; right: 1px; top: 1px; width: 12px; height: 12px; border-radius: 3px; background: #1f62dc; pointer-events: none; }
.pick b svg { width: 10px; height: 12px; margin: 0 auto; }
.dbtns { display: flex; gap: 9px; padding: 6px 7px 0 9px; }
.dialog .clear { width: 69px; margin-right: auto; }
.dialog .cancel { width: 57px; }
.dialog .ok { background: #1f5cd6; }

.right { width: 169px; flex: none; background: #231f24; border-right: 1px solid #3c3a3d; border-bottom-right-radius: 5px; overflow: hidden; display: flex; flex-direction: column; font-size: 7px; line-height: 10px; }
.rtabs { height: 28px; flex: none; display: flex; padding-left: 21px; background: #17151a; border-bottom: 1px solid #2e2c2f; }
.rtabs button { width: 32px; border-bottom: 2px solid transparent; }
.rtabs .on { border-color: #2463dd; }
.rtabs svg { width: 12px; height: 12px; margin: 0 auto; }
.insp { flex: 1; min-height: 0; overflow: hidden; border-right: 7px solid #302e31; }
h3 { display: flex; align-items: center; font: 500 8px/12px Inter, sans-serif; background: #252726; border: 1px solid #302f31; border-width: 1px 0; padding-left: 2px; height: 14px; }
h3::before { content: ""; border: 3px solid transparent; border-top: 5px solid #e4e3e5; border-bottom: 0; margin-right: 2px; }
.sec { padding: 0 9px 0 7px; }
.sec b { font-weight: 700; display: block; }
.sec input[type=text] { background: #292a2a; border-bottom: 1px solid #3b3a3c; height: 9px; min-width: 0; }
.pos { padding-top: 11px; height: 132px; }
.row { display: flex; align-items: center; height: 17px; font-weight: 700; }
.row label { width: 40px; }
.row input { flex: 1; }
.row .pencil { margin: 0 1px 0 8px; color: #5f5d61; }
hr { border: 0; border-top: 1px solid #383539; margin: 0; }
.row + hr { margin: 1px 0 6px; }
.pgrid { display: grid; grid-template-columns: 40px 55px 1fr; row-gap: 4px; }
.pgrid .second { grid-column: 2; }
.pgrid span { display: flex; gap: 2px; color: #626064; width: 50px; }
.pgrid input { width: 34px; text-align: right; padding-right: 1px; }
.pgrid label { width: 50px; text-align: center; display: block; padding-right: 16px; }
.pgrid + hr { margin: 4px 0 6px; }
.auto { height: 79px; padding: 6px 0 0 8px; }
.auto svg { width: 96px; height: 66px; }
.arr { height: 119px; padding-top: 8px; }
.arow { display: flex; align-items: flex-end; gap: 1px; height: 28px; }
.arow b { margin-bottom: 2px; }
.gap2 { height: 32px; gap: 2px; }
.arr hr { margin: 5px 0; }
.arow .end { margin-left: auto; }
.arrg { margin-left: 5px; }
.bg { display: flex; border: 1px solid #343236; background: #343236; gap: 1px; }
.bg button { width: 16px; height: 14px; background: #2b292d; color: #59575b; }
.bg svg { width: 16px; height: 16px; margin: -1px 0; stroke: #59575b; }
.bg use { stroke: none; }
.bg .f { fill: #59575b; stroke: none; }
.slide { padding-top: 9px; }
.slide label { display: flex; align-items: center; gap: 3px; color: #5f5d61; margin-top: 2px; }
.slide input { width: 7px; height: 7px; background: #3a383c; border-radius: 1px; }
```
